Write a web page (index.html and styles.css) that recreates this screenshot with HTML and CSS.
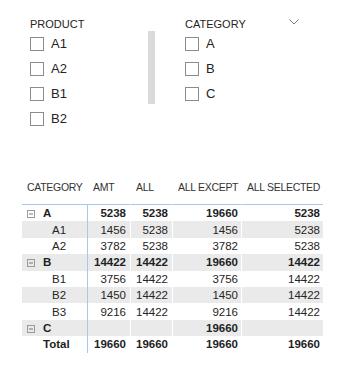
FILE: index.html
```html
<!DOCTYPE html>
<html>
<head>
    <title>Matrix</title>
    <link rel="stylesheet" href="styles.css">
</head>
<body>
    <div class="slicers">
        <div class="slicer product">
            <div class="slicer-title">PRODUCT</div>
            <div class="slicer-body">
                <div class="opts">
                    <div class="opt"><span class="box"></span>A1</div>
                    <div class="opt"><span class="box"></span>A2</div>
                    <div class="opt"><span class="box"></span>B1</div>
                    <div class="opt"><span class="box"></span>B2</div>
                </div>
                <div class="scrollbar"></div>
            </div>
        </div>
        <div class="slicer category">
            <div class="slicer-title">
                CATEGORY
                <svg class="chev" width="10" height="6" viewBox="0 0 10 6"><polyline points="0.5,0.5 5,5 9.5,0.5" fill="none" stroke="#7a7a7a" stroke-width="1"/></svg>
            </div>
            <div class="opts">
                <div class="opt"><span class="box"></span>A</div>
                <div class="opt"><span class="box"></span>B</div>
                <div class="opt"><span class="box"></span>C</div>
            </div>
        </div>
    </div>

    <table class="matrix">
        <colgroup>
            <col style="width:66px">
            <col style="width:42px">
            <col style="width:42px">
            <col style="width:69px">
            <col style="width:82px">
        </colgroup>
        <thead>
            <tr>
                <th>CATEGORY</th>
                <th>AMT</th>
                <th>ALL</th>
                <th>ALL EXCEPT</th>
                <th>ALL SELECTED</th>
            </tr>
        </thead>
        <tbody>
            <tr class="grp">
                <td class="lbl"><svg class="exp" width="8" height="8" viewBox="0 0 8 8"><rect x="0.5" y="0.5" width="7" height="7" fill="none" stroke="#9a9a9a"/><line x1="2" y1="4" x2="6" y2="4" stroke="#777"/></svg>A</td>
                <td>5238</td><td>5238</td><td>19660</td><td>5238</td>
            </tr>
            <tr class="alt">
                <td class="lbl child">A1</td>
                <td>1456</td><td>5238</td><td>1456</td><td>5238</td>
            </tr>
            <tr>
                <td class="lbl child">A2</td>
                <td>3782</td><td>5238</td><td>3782</td><td>5238</td>
            </tr>
            <tr class="grp alt">
                <td class="lbl"><svg class="exp" width="8" height="8" viewBox="0 0 8 8"><rect x="0.5" y="0.5" width="7" height="7" fill="none" stroke="#9a9a9a"/><line x1="2" y1="4" x2="6" y2="4" stroke="#777"/></svg>B</td>
                <td>14422</td><td>14422</td><td>19660</td><td>14422</td>
            </tr>
            <tr>
                <td class="lbl child">B1</td>
                <td>3756</td><td>14422</td><td>3756</td><td>14422</td>
            </tr>
            <tr class="alt">
                <td class="lbl child">B2</td>
                <td>1450</td><td>14422</td><td>1450</td><td>14422</td>
            </tr>
            <tr>
                <td class="lbl child">B3</td>
                <td>9216</td><td>14422</td><td>9216</td><td>14422</td>
            </tr>
            <tr class="grp alt">
                <td class="lbl"><svg class="exp" width="8" height="8" viewBox="0 0 8 8"><rect x="0.5" y="0.5" width="7" height="7" fill="none" stroke="#9a9a9a"/><line x1="2" y1="4" x2="6" y2="4" stroke="#777"/></svg>C</td>
                <td></td><td></td><td>19660</td><td></td>
            </tr>
            <tr class="grp">
                <td class="lbl total">Total</td>
                <td>19660</td><td>19660</td><td>19660</td><td>19660</td>
            </tr>
        </tbody>
    </table>
</body>
</html>
```

FILE: styles.css
```css
body {
    margin: 0;
    font-family: 'Liberation Sans', Arial, sans-serif;
    color: #252423;
    background: #fff;
}

.slicers {
    display: flex;
    padding-top: 18px;
}

.product {
    margin-left: 30px;
    width: 125px;
}

.category {
    margin-left: 30px;
    width: 116px;
}

.slicer-title {
    display: flex;
    justify-content: space-between;
    font-size: 11px;
    line-height: 13px;
    color: #252423;
}

.chev {
    margin-top: 1px;
    margin-right: 2px;
}

.slicer-body {
    display: flex;
}

.opts {
    width: 118px;
}

.opt {
    display: flex;
    align-items: center;
    gap: 7px;
    height: 25px;
    font-size: 13px;
}

.box {
    width: 14px;
    height: 14px;
    box-sizing: border-box;
    border: 1px solid #8c8c8c;
}

.scrollbar {
    width: 7px;
    height: 73px;
    background: #dadada;
}

.matrix {
    margin: 48px 0 0 22px;
    border-collapse: separate;
    border-spacing: 0;
    table-layout: fixed;
    width: 301px;
    font-size: 11.5px;
}

.matrix th {
    font-weight: normal;
    font-size: 10.5px;
    letter-spacing: -0.3px;
    line-height: 16px;
    color: #333;
    text-align: left;
    padding: 0 0 9px 5px;
    border-bottom: 1px solid #a6c8ec;
    white-space: nowrap;
}

.matrix th:nth-child(n+3),
.matrix td:nth-child(n+3) {
    border-left: 1px solid #fff;
}

.matrix td {
    height: 16.4px;
    line-height: 16px;
    padding: 0 4px 0 0;
    text-align: right;
    white-space: nowrap;
}

.matrix td:nth-child(n+4) {
    padding-right: 3px;
}

.matrix td.lbl {
    text-align: left;
    padding-left: 5px;
    border-right: 1px solid #a6c8ec;
}

.matrix td.child {
    padding-left: 30px;
}

.matrix td.total {
    padding-left: 21px;
}

.alt td {
    background: #eaeaea;
}

.grp td {
    font-weight: bold;
    color: #1f1f1f;
}

.exp {
    vertical-align: -1px;
    margin-right: 8px;
}
```
